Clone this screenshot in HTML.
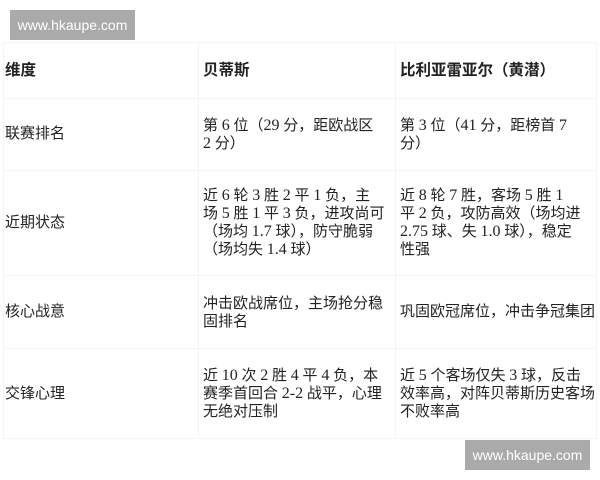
<!DOCTYPE html>
<html><head><meta charset="utf-8"><style>
body{margin:0;width:600px;height:480px;background:#fff;position:relative;overflow:hidden;font-family:"Liberation Serif","Noto Sans CJK SC",sans-serif;font-size:15px;color:#222}
.t{position:absolute;line-height:18px;white-space:nowrap}
.b{font-family:"Liberation Sans","Noto Sans CJK SC",sans-serif;font-weight:bold;font-size:15.5px}
.s{font-family:"Liberation Sans","Noto Sans CJK SC",sans-serif}
.d{font-size:16px}
.wm{position:absolute;background:#aaa;color:#fff;font-family:"Liberation Sans",sans-serif;font-size:14px;text-align:center;line-height:30px;width:125px;height:30px}
.hl{position:absolute;left:3px;width:594px;height:1px;background:#f4f4f4}
.vl{position:absolute;top:42px;height:396px;width:1px;background:#f4f4f4}
</style></head><body>
<div class="wm" style="left:10px;top:10px">www.hkaupe.com</div>
<div class="wm" style="left:465px;top:440px">www.hkaupe.com</div>
<div class="hl" style="top:42px"></div><div class="hl" style="top:98px"></div><div class="hl" style="top:170px"></div><div class="hl" style="top:275px"></div><div class="hl" style="top:348px"></div><div class="hl" style="top:438px"></div>
<div class="vl" style="left:3px"></div><div class="vl" style="left:198px"></div><div class="vl" style="left:395px"></div><div class="vl" style="left:596px"></div>
<div class="t b" style="left:5px;top:62px">维度</div>
<div class="t b" style="left:203px;top:62px">贝蒂斯</div>
<div class="t b" style="left:400px;top:62px">比利亚雷亚尔（黄潜）</div>
<div class="t s" style="left:5px;top:125px">联赛排名</div>
<div class="t" style="left:203px;top:117px">第 <span class="d">6</span> 位（<span class="d">29</span> 分，距欧战区<br><span class="d">2</span> 分）</div>
<div class="t" style="left:400px;top:117px">第 <span class="d">3</span> 位（<span class="d">41</span> 分，距榜首 <span class="d">7</span><br>分）</div>
<div class="t s" style="left:5px;top:214px">近期状态</div>
<div class="t" style="left:203px;top:187px">近 <span class="d">6</span> 轮 <span class="d">3</span> 胜 <span class="d">2</span> 平 <span class="d">1</span> 负，主<br>场 <span class="d">5</span> 胜 <span class="d">1</span> 平 <span class="d">3</span> 负，进攻尚可<br>（场均 <span class="d">1.7</span> 球），防守脆弱<br>（场均失 <span class="d">1.4</span> 球）</div>
<div class="t" style="left:400px;top:187px">近 <span class="d">8</span> 轮 <span class="d">7</span> 胜，客场 <span class="d">5</span> 胜 <span class="d">1</span><br>平 <span class="d">2</span> 负，攻防高效（场均进<br><span class="d">2.75</span> 球、失 <span class="d">1.0</span> 球），稳定<br>性强</div>
<div class="t s" style="left:5px;top:303px">核心战意</div>
<div class="t s" style="left:203px;top:295px">冲击欧战席位，主场抢分稳<br>固排名</div>
<div class="t s" style="left:400px;top:303px">巩固欧冠席位，冲击争冠集团</div>
<div class="t s" style="left:5px;top:385px">交锋心理</div>
<div class="t" style="left:203px;top:367px">近 <span class="d">10</span> 次 <span class="d">2</span> 胜 <span class="d">4</span> 平 <span class="d">4</span> 负，本<br>赛季首回合 <span class="d">2-2</span> 战平，心理<br>无绝对压制</div>
<div class="t" style="left:400px;top:367px">近 <span class="d">5</span> 个客场仅失 <span class="d">3</span> 球，反击<br>效率高，对阵贝蒂斯历史客场<br>不败率高</div>
</body></html>
